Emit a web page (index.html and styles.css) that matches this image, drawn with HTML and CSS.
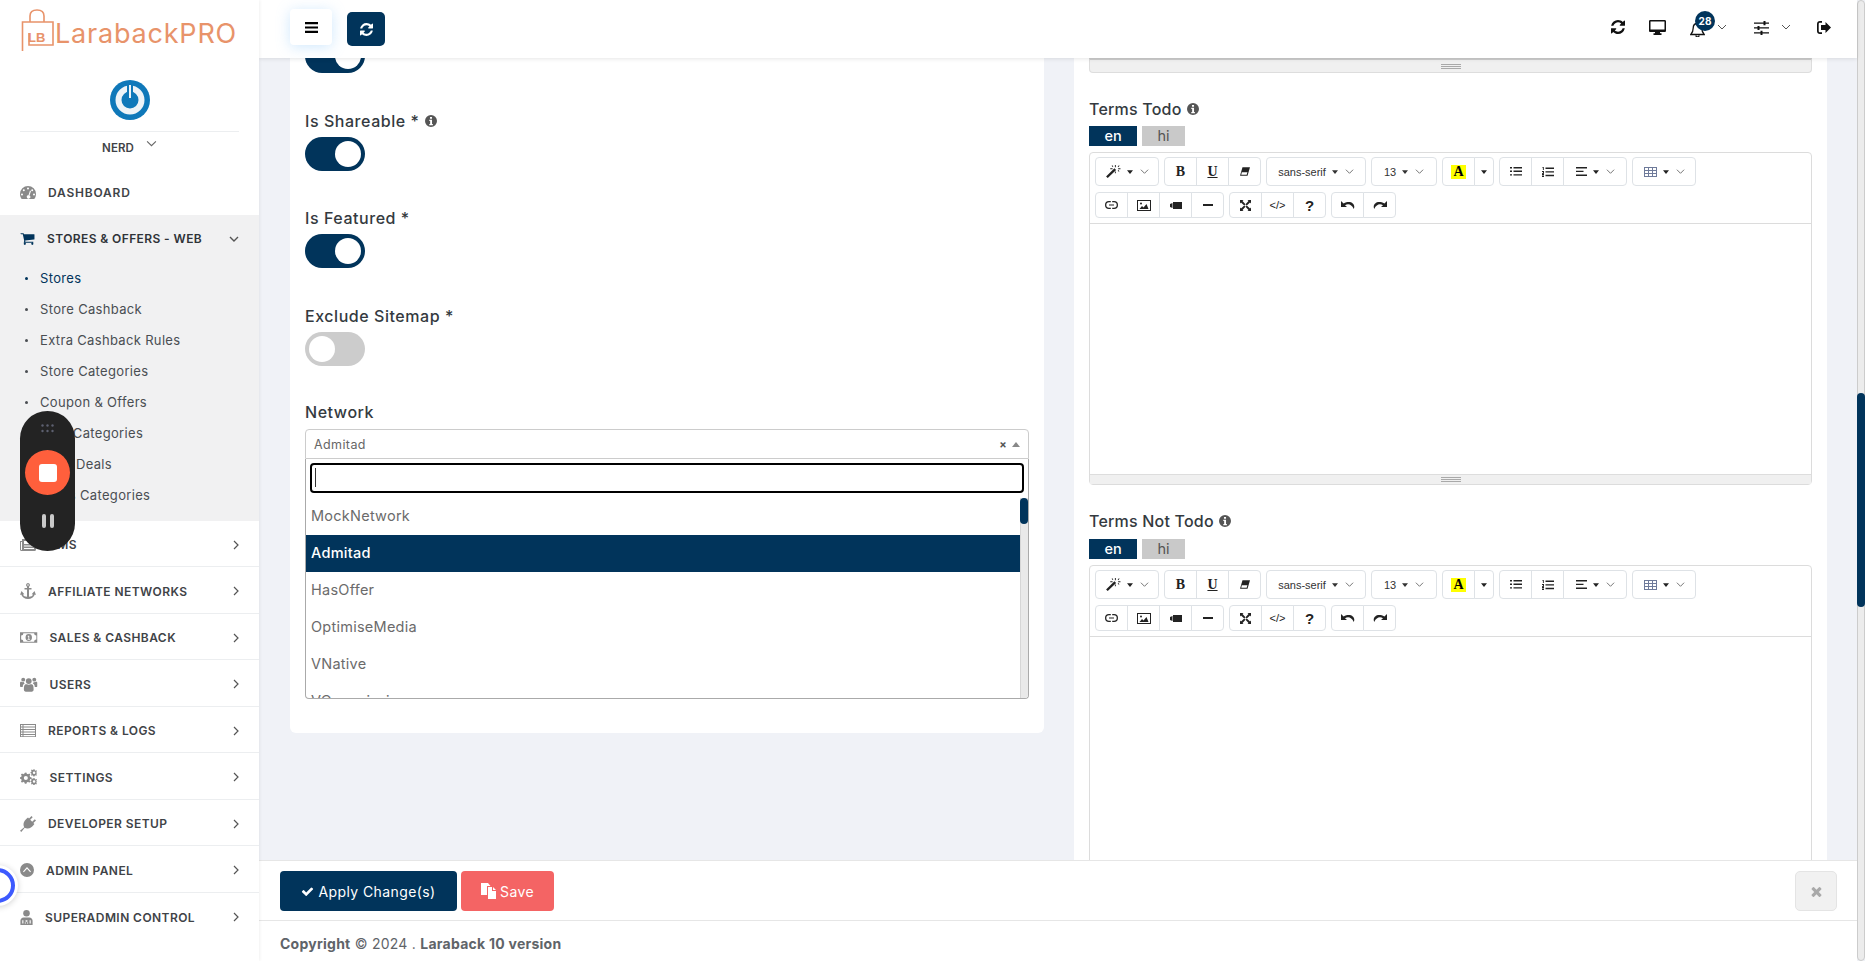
FILE: index.html
```html
<!DOCTYPE html>
<html lang="en">
<head>
<meta charset="utf-8">
<title>LarabackPRO</title>
<link rel="stylesheet" href="styles.css">
</head>
<body>
<svg class="defs" width="0" height="0" aria-hidden="true">
  <symbol id="i-refresh" viewBox="128 128 1536 1536"><path d="M1639 1056q0 5-1 7-64 268-268 434.5t-478 166.5q-146 0-282.5-55t-243.5-157l-129 129q-19 19-45 19t-45-19-19-45v-448q0-26 19-45t45-19h448q26 0 45 19t19 45-19 45l-137 137q71 66 161 102t187 36q134 0 250-65t186-179q11-17 53-117 8-23 30-23h192q13 0 22.5 9.5t9.5 22.5zm25-800v448q0 26-19 45t-45 19h-448q-26 0-45-19t-19-45 19-45l138-138q-148-137-349-137-134 0-250 65t-186 179q-11 17-53 117-8 23-30 23h-199q-13 0-22.5-9.5t-9.5-22.5v-7q65-268 270-434.5t480-166.5q146 0 284 55.5t245 156.5l130-129q19-19 45-19t45 19 19 45z"/></symbol>
  <symbol id="i-check" viewBox="0 0 1792 1792"><path d="M1671 566q0 40-28 68l-724 724-136 136q-28 28-68 28t-68-28l-136-136-362-362q-28-28-28-68t28-68l136-136q28-28 68-28t68 28l294 295 656-657q28-28 68-28t68 28l136 136q28 28 28 68z"/></symbol>
  <symbol id="i-times" viewBox="0 0 1792 1792"><path d="M1490 1322q0 40-28 68l-136 136q-28 28-68 28t-68-28l-294-294-294 294q-28 28-68 28t-68-28l-136-136q-28-28-28-68t28-68l294-294-294-294q-28-28-28-68t28-68l136-136q28-28 68-28t68 28l294 294 294-294q28-28 68-28t68 28l136 136q28 28 28 68t-28 68l-294 294 294 294q28 28 28 68z"/></symbol>
  <symbol id="i-cart" viewBox="0 128 1792 1536"><path d="M704 1536q0 52-38 90t-90 38-90-38-38-90 38-90 90-38 90 38 38 90zm896 0q0 52-38 90t-90 38-90-38-38-90 38-90 90-38 90 38 38 90zm128-1088v512q0 24-16.5 42.5t-40.5 21.5l-1044 122q13 60 13 70 0 16-24 64h920q26 0 45 19t19 45-19 45-45 19h-1024q-26 0-45-19t-19-45q0-11 8-31.5t16-36 21.5-40 15.5-29.5l-177-823h-204q-26 0-45-19t-19-45 19-45 45-19h256q16 0 28.5 6.5t19.5 15.5 13 24.5 8 26 5.5 29.5 4.5 26h1201q26 0 45 19t19 45z"/></symbol>
  <symbol id="i-info" viewBox="1 1 14 14"><path fill-rule="evenodd" d="M8 1a7 7 0 1 0 0 14A7 7 0 0 0 8 1zM6.800 3.200h2.400v2.200H6.800zM6 6.600h3.200v5h1v1.400H6v-1.400h1V8H6z"/></symbol>
  <symbol id="i-chev-r" viewBox="0 0 10 10"><path d="M3 1l4 4-4 4" fill="none" stroke="currentColor" stroke-width="1.200"/></symbol>
  <symbol id="i-chev-d" viewBox="0 0 10 10"><path d="M1 3l4 4 4-4" fill="none" stroke="currentColor" stroke-width="1"/></symbol>
  <symbol id="i-chev-db" viewBox="0 0 10 10"><path d="M1 3l4 4 4-4" fill="none" stroke="currentColor" stroke-width="1.400"/></symbol>
  <symbol id="i-caret" viewBox="0 0 8 5"><path d="M0 0h8L4 5z"/></symbol>
  <symbol id="i-dash" viewBox="0 0 16 13"><path fill-rule="evenodd" d="M8 0a8 8 0 0 0-8 8c0 2 .6 3.700 1.700 5h12.600A8 8 0 0 0 16 8a8 8 0 0 0-8-8zM8 1.500a1 1 0 1 1 0 2 1 1 0 0 1 0-2zM3.800 3.300a1 1 0 1 1 0 2 1 1 0 0 1 0-2zM12.200 3.300a1 1 0 1 1 0 2 1 1 0 0 1 0-2zM2 7.500a1 1 0 1 1 0 2 1 1 0 0 1 0-2zM14 7.500a1 1 0 1 1 0 2 1 1 0 0 1 0-2zM10 4.500l1 .4-1.500 4.600a1.700 1.700 0 1 1-1-.3z"/></symbol>
  <symbol id="i-news" viewBox="0 0 16 12"><path fill-rule="evenodd" d="M0 2h2V0h14v10.500a1.500 1.500 0 0 1-1.500 1.500h-13A1.500 1.500 0 0 1 0 10.500zM1 3v7.500a.5.500 0 0 0 1 0V3zM4 2v3h5V2zM10 2v1h4V2zM10 4v1h4V4zM4 6.500v1h10v-1zM4 9v1h10V9z"/></symbol>
  <symbol id="i-anchor" viewBox="0 0 16 16"><path fill-rule="evenodd" d="M8 0a2 2 0 0 1 1 3.700V5h2.500v1.500H9v7.300c2 0 3.600-1 4-2.300l-1.300-.2L14.500 8 16 12l-1.200-.5C14 14.200 11.200 16 8 16s-6-1.800-6.800-4.500L0 12l1.500-4 2.800 3.300-1.300.2c.4 1.300 2 2.300 4 2.300V6.500H4.500V5H7V3.700A2 2 0 0 1 8 0zm0 1.200a.800.800 0 1 0 0 1.600.800.800 0 0 0 0-1.600z"/></symbol>
  <symbol id="i-money" viewBox="0 0 18 11"><path fill-rule="evenodd" d="M0 0h18v11H0zM3.500 1.200A2.300 2.300 0 0 1 1.200 3.500v4a2.300 2.300 0 0 1 2.300 2.300h11a2.300 2.300 0 0 1 2.300-2.300v-4a2.300 2.300 0 0 1-2.300-2.300zM9 2a3.300 3.500 0 1 1 0 7 3.300 3.500 0 0 1 0-7zM8 3.800v.8h.6V7h-.8v.7h2.400V7h-.7V3.800z"/></symbol>
  <symbol id="i-users" viewBox="0 0 18 16"><circle cx="9" cy="5" r="3"/><circle cx="3.300" cy="3.500" r="2"/><circle cx="14.700" cy="3.500" r="2"/><path d="M4.500 9.500C5 8.500 6 8 7 8.300c1.300.6 2.700.6 4 0 1-.3 2 .2 2.500 1.200.5 1 .5 4 .5 4.500 0 1-.8 2-2 2H6c-1.200 0-2-1-2-2 0-.5 0-3.500.5-4.500zM0 7c0-1 .8-1.500 1.500-1.200.9.400 1.800.4 2.300.2.200.6.500 1.100 1 1.500-1.300.6-2 2-2 3.500H1c-.6 0-1-.5-1-1zM18 7c0-1-.8-1.500-1.500-1.200-.9.400-1.800.4-2.300.2-.2.600-.5 1.100-1 1.500 1.300.6 2 2 2 3.500H17c.6 0 1-.5 1-1z"/></symbol>
  <symbol id="i-list" viewBox="0 0 16 13"><path fill-rule="evenodd" d="M0 0h16v13H0zM3.500 1v1.500H15V1zM3.500 3.500V5H15V3.500zM3.500 6v1.500H15V6zM3.500 8.500V10H15V8.500zM3.500 11v1.200H15V11zM1 1v1.500h1.500V1zM1 3.500V5h1.500V3.500zM1 6v1.500h1.500V6zM1 8.500V10h1.500V8.500zM1 11v1.200h1.500V11z"/></symbol>
  <symbol id="i-cogs" viewBox="0 0 18 16"><path fill-rule="evenodd" d="M5 3.500l1.500-.2.500 1.300 1.300.6 1.200-.8 1.100 1.100-.7 1.200.5 1.300 1.500.4v1.500l-1.500.3-.5 1.300.7 1.200-1.100 1.100-1.200-.8-1.300.6-.4 1.400H5l-.4-1.400-1.300-.6-1.200.8L1 12.600l.7-1.200-.5-1.300L0 9.800V8.300l1.200-.4.500-1.300L1 5.400l1.100-1.100 1.200.8 1.300-.6zm1 3.400a2.100 2.100 0 1 0 0 4.200 2.100 2.100 0 0 0 0-4.200z"/><path fill-rule="evenodd" d="M14 0l1 .1.200 1 .8.400.9-.5.600.9-.7.700.2.900.9.400V4l-.9.300-.2.900.6.800-.7.700-.8-.5-.8.400-.3 1h-1l-.2-1-.8-.4-.9.500-.6-.8.600-.7-.2-.9-.9-.3V3l.9-.3.200-.9-.6-.7.700-.8.800.5.900-.3zm.5 2.300a1.300 1.300 0 1 0 0 2.600 1.300 1.300 0 0 0 0-2.600zM14 9l1 .1.200 1 .8.400.9-.5.600.9-.7.700.2.900.9.400V13l-.9.300-.2.900.6.800-.7.700-.8-.5-.8.400-.3 1h-1l-.2-1-.8-.4-.9.500-.6-.8.600-.7-.2-.9-.9-.3V12l.9-.3.200-.9-.6-.7.700-.8.800.5.900-.3zm.5 2.300a1.300 1.300 0 1 0 0 2.600 1.300 1.300 0 0 0 0-2.600z"/></symbol>
  <symbol id="i-plug" viewBox="0 0 16 16"><path d="M11.500 0l1.200 1.200-2.500 2.600 2 2L14.800 3.300 16 4.500 13.400 7l1 1-1 1.200C12 11 10 12.300 7.800 12.500 6.500 12.600 5.500 12.300 4.700 11.800L1.300 16 0 14.700l4.200-3.500C3.700 10.400 3.400 9.400 3.500 8.100 3.700 6 5 4 6.800 2.600L8 1.600l1 1z"/></symbol>
  <symbol id="i-admin" viewBox="0 0 14 14"><path fill-rule="evenodd" d="M7 0a7 7 0 1 0 0 14A7 7 0 0 0 7 0zM7 4l4 4.500-.8.800L7 5.800 3.800 9.300 3 8.500z"/></symbol>
  <symbol id="i-tie" viewBox="0 0 13 16"><circle cx="6.500" cy="3.500" r="3.500"/><path fill-rule="evenodd" d="M3.500 8h6c2 0 3.500 1.500 3.500 3.500V16H0v-4.500C0 9.500 1.500 8 3.500 8zM2 11v3.500h1.200V11zM5.500 11v1.500h2V11zM4.700 13.200v1.300h1.200v-1.300zM7 13.200v1.300h1.200v-1.300zM9.800 11v3.500H11V11z"/></symbol>
  <symbol id="i-desktop" viewBox="0 0 17 15"><path fill-rule="evenodd" d="M1.300 0h14.400C16.400 0 17 .6 17 1.300v9.400c0 .7-.6 1.300-1.300 1.300H11v1.300h1.500V15h-8v-1.700H6V12H1.300C.6 12 0 11.400 0 10.700V1.300C0 .6.600 0 1.300 0zm.2 1.500v8h14v-8z"/></symbol>
  <symbol id="i-bell" viewBox="0 0 15 15"><path d="M7.500 1.500c-2.800 0-4.300 2-4.300 4.500 0 3-1 5-2.400 6.500h13.400C12.800 11 11.800 9 11.800 6c0-2.500-1.500-4.500-4.300-4.500zM6 13.500a1.500 1.500 0 0 0 3 0" fill="none" stroke="currentColor" stroke-width="1.300"/></symbol>
  <symbol id="i-sliders" viewBox="0 0 15 14"><path d="M0 1.500h15v1.300H0zM0 6.300h15v1.300H0zM0 11.200h15v1.300H0zM9.500 0h2v4.300h-2zM3.500 5h2v4h-2zM6.500 9.700h2V14h-2z"/></symbol>
  <symbol id="i-signout" viewBox="0 0 14 13"><path d="M5 0v1.700H3c-.8 0-1.300.5-1.300 1.300v7c0 .8.500 1.300 1.300 1.300h2V13H3c-1.800 0-3-1.200-3-3V3c0-1.800 1.200-3 3-3zM8.500 1L14 6.500 8.500 12V9H4V4h4.500z"/></symbol>
  <symbol id="i-files" viewBox="0 0 15 16"><path fill-rule="evenodd" d="M0 0h7l2.500 3H6v9H0zM7 4h4v4h4v8H7zM12 4l3 3h-3z"/></symbol>
  <symbol id="i-wand" viewBox="0 0 16 14"><path d="M0 12.500L9 3.500l1.800 1.800-9 8.700zM9.500 0h1v2.500h-1zM13 3.500h2.500v1H13zM9.500 7h1v2h-1zM4.500 3.500H7v1H4.500zM6 .8l.8-.6 1 1.300-.8.600zM12.500 1.500l1.400-1.300.6.700-1.300 1.400zM12.500 6l.7-.6 1.200 1.200-.7.700z"/></symbol>
  <symbol id="i-eraser" viewBox="0 0 12 10"><path d="M3 0h9L9 10H0z"/><path d="M2.200 6L1.500 9h6.500l.9-3z" fill="#fff"/></symbol>
  <symbol id="i-ul" viewBox="0 0 12 9"><path d="M3.500 0H12v1.400H3.500zM3.500 3.600H12V5H3.500zM3.500 7.200H12v1.400H3.500zM0 0h2v1.400H0zM0 3.600h2V5H0zM0 7.200h2v1.400H0z"/></symbol>
  <symbol id="i-ol" viewBox="0 0 12 10"><path d="M3.500 .6H12V2H3.500zM3.500 4.200H12v1.400H3.500zM3.500 7.800H12v1.400H3.500zM.5 0h1.300v3H.9V1H.5zM0 4h2v2.700l-1 .3H2v1H0V6.600l1.100-1V5H0zM0 8.500h2V10H0z"/></symbol>
  <symbol id="i-align" viewBox="0 0 11 9"><path d="M0 0h11v1.400H0zM0 3.700h7.500v1.400H0zM0 7.500h11V9H0z"/></symbol>
  <symbol id="i-table" viewBox="0 0 13 10"><path fill-rule="evenodd" d="M0 0h13v10H0zM1 1v2h3V1zM5 1v2h3V1zM9 1v2h3V1zM1 4v2h3V4zM5 4v2h3V4zM9 4v2h3V4zM1 7v2h3V7zM5 7v2h3V7zM9 7v2h3V7z"/></symbol>
  <symbol id="i-link" viewBox="0 0 12 8"><path d="M3.500 0h1.800v1.300H3.500a2.700 2.700 0 0 0 0 5.400h1.800V8H3.500a4 4 0 0 1 0-8zM6.700 0h1.800a4 4 0 0 1 0 8H6.700V6.700h1.800a2.700 2.700 0 0 0 0-5.400H6.700zM3.500 3.400h5v1.200h-5z"/></symbol>
  <symbol id="i-pic" viewBox="0 0 14 11"><path fill-rule="evenodd" d="M0 0h14v11H0zM1 1v9h12V1z"/><path d="M2.500 9l2.500-3 1.500 1.500L9.500 4l2 5z"/><circle cx="4" cy="3.500" r="1"/></symbol>
  <symbol id="i-video" viewBox="0 0 12 7"><path d="M3 0h9v7H3zM0 2l2.500-1v5L0 5z"/></symbol>
  <symbol id="i-expand" viewBox="0 0 11 11"><path d="M0 0h3.500L2.500 1 5.500 4.200 4.200 5.500 1 2.500 0 3.500zM11 0v3.500l-1-1L6.800 5.500 5.500 4.200 8.500 1l-1-1zM0 11V7.500l1 1 3.200-3 1.300 1.300-3 3.200 1 1zM11 11H7.500l1-1-3-3.200 1.300-1.300 3.200 3 1-1z"/></symbol>
  <symbol id="i-undo" viewBox="0 0 14 8"><path d="M0 0v6h6L4 4.200C7 2.300 10.500 3 12.800 8 15 3 9.500-1.500 2.600 2.500z"/></symbol>
  <symbol id="i-redo" viewBox="0 0 14 8"><path d="M14 0v6H8l2-1.800C7 2.300 3.500 3 1.200 8-1 3 4.500-1.500 11.400 2.500z"/></symbol>
</svg>

<div class="app">
  <aside class="sidebar">
    <div class="brand">
      <svg class="bag" width="34" height="44" viewBox="0 0 34 44">
        <path d="M1.500 42V13H9M9 13V7C9 3 12 1 16 1s7 2 7 6v6M9 13h14M23 13h9v23H8V24" fill="none" stroke="#e8936a" stroke-width="1.600"/>
        <text x="7" y="33" class="bag-text">LB</text>
      </svg>
      <span class="brand-name">LarabackPRO</span>
    </div>
    <div class="avatar">
      <svg width="40" height="40" viewBox="0 0 40 40">
        <circle cx="20" cy="20" r="20" fill="#0f78b9"/>
        <circle cx="20" cy="20" r="11.500" fill="none" stroke="#eef3f7" stroke-width="6"/>
        <rect x="17" y="5" width="6" height="15" fill="#0f78b9"/>
        <rect x="19" y="5" width="2" height="13" fill="#eef3f7"/>
      </svg>
    </div>
    <div class="user"><span>NERD</span><svg class="user-chev" width="11" height="11"><use href="#i-chev-d"/></svg></div>
    <nav class="nav">
      <a class="nav-row first"><svg class="ni" width="16" height="13"><use href="#i-dash"/></svg><span>DASHBOARD</span></a>
      <div class="group">
        <a class="group-head"><svg class="ni navy" width="15" height="13"><use href="#i-cart"/></svg><span>STORES &amp; OFFERS - WEB</span><svg class="chev" width="10" height="10"><use href="#i-chev-db"/></svg></a>
        <ul class="sub">
          <li class="active">Stores</li>
          <li>Store Cashback</li>
          <li>Extra Cashback Rules</li>
          <li>Store Categories</li>
          <li>Coupon &amp; Offers</li>
          <li>Deal Categories</li>
          <li>Daily Deals</li>
          <li>Deals Categories</li>
        </ul>
      </div>
      <a class="nav-row"><svg class="ni" width="16" height="12"><use href="#i-news"/></svg><span>CMS</span><svg class="chev" width="10" height="10"><use href="#i-chev-r"/></svg></a>
      <a class="nav-row"><svg class="ni" width="16" height="16"><use href="#i-anchor"/></svg><span>AFFILIATE NETWORKS</span><svg class="chev" width="10" height="10"><use href="#i-chev-r"/></svg></a>
      <a class="nav-row"><svg class="ni" width="17.500" height="11"><use href="#i-money"/></svg><span>SALES &amp; CASHBACK</span><svg class="chev" width="10" height="10"><use href="#i-chev-r"/></svg></a>
      <a class="nav-row"><svg class="ni" width="17.500" height="16"><use href="#i-users"/></svg><span>USERS</span><svg class="chev" width="10" height="10"><use href="#i-chev-r"/></svg></a>
      <a class="nav-row"><svg class="ni" width="16" height="13"><use href="#i-list"/></svg><span>REPORTS &amp; LOGS</span><svg class="chev" width="10" height="10"><use href="#i-chev-r"/></svg></a>
      <a class="nav-row"><svg class="ni" width="17.500" height="16"><use href="#i-cogs"/></svg><span>SETTINGS</span><svg class="chev" width="10" height="10"><use href="#i-chev-r"/></svg></a>
      <a class="nav-row"><svg class="ni" width="16" height="16"><use href="#i-plug"/></svg><span>DEVELOPER SETUP</span><svg class="chev" width="10" height="10"><use href="#i-chev-r"/></svg></a>
      <a class="nav-row"><svg class="ni" width="14" height="14"><use href="#i-admin"/></svg><span>ADMIN PANEL</span><svg class="chev" width="10" height="10"><use href="#i-chev-r"/></svg></a>
      <a class="nav-row last"><svg class="ni" width="13" height="15"><use href="#i-tie"/></svg><span>SUPERADMIN CONTROL</span><svg class="chev" width="10" height="10"><use href="#i-chev-r"/></svg></a>
    </nav>
  </aside>

  <div class="main">
    <header class="topbar">
      <button class="menu-btn"><svg width="13" height="11" viewBox="0 0 13 11"><path d="M0 0h13v2.200H0zM0 4.400h13v2.200H0zM0 8.800h13V11H0z"/></svg></button>
      <button class="sync-btn"><svg width="13" height="13"><use href="#i-refresh"/></svg></button>
      <div class="top-icons">
        <svg width="14" height="14"><use href="#i-refresh"/></svg>
        <svg class="ti-desktop" width="17" height="15"><use href="#i-desktop"/></svg>
        <span class="bell"><svg width="15" height="15"><use href="#i-bell"/></svg><b class="badge">28</b></span>
        <svg class="ti-chev" width="10" height="10"><use href="#i-chev-d"/></svg>
        <svg class="ti-sliders" width="15" height="14"><use href="#i-sliders"/></svg>
        <svg class="ti-chev" width="10" height="10"><use href="#i-chev-d"/></svg>
        <svg class="ti-out" width="14" height="13"><use href="#i-signout"/></svg>
      </div>
    </header>

    <div class="content">
      <section class="card left">
        <div class="field clipped"><span class="toggle on"></span></div>
        <div class="field">
          <label class="lbl">Is Shareable * <svg class="info" width="12" height="12"><use href="#i-info"/></svg></label>
          <span class="toggle on"></span>
        </div>
        <div class="field">
          <label class="lbl">Is Featured *</label>
          <span class="toggle on"></span>
        </div>
        <div class="field">
          <label class="lbl">Exclude Sitemap *</label>
          <span class="toggle"></span>
        </div>
        <label class="lbl net">Network</label>
        <div class="select">
          <span>Admitad</span>
          <i class="clear">×</i>
          <svg class="arrow" width="8" height="5" viewBox="0 0 8 5"><path d="M0 5h8L4 0z"/></svg>
        </div>
        <div class="drop">
          <div class="search"><input class="search-input" type="text" value=""><span class="cursor"></span></div>
          <div class="opts">
            <ul class="opt-list">
              <li>MockNetwork</li>
              <li class="sel">Admitad</li>
              <li>HasOffer</li>
              <li>OptimiseMedia</li>
              <li>VNative</li>
              <li>VCommission</li>
            </ul>
            <div class="opt-track"><div class="opt-thumb"></div></div>
          </div>
        </div>
      </section>

      <section class="card right">
        <div class="statusbar first-bar"><span class="grip"></span></div>
        <div class="ed-block">
          <label class="lbl">Terms Todo <svg class="info" width="12" height="12"><use href="#i-info"/></svg></label>
          <div class="tabs"><span class="tab on">en</span><span class="tab">hi</span></div>
          <div class="editor">
            <div class="tools">
              <div class="tr">
                <div class="g"><span class="b w63"><svg class="d" width="15" height="13"><use href="#i-wand"/></svg><svg class="cr" width="6" height="4"><use href="#i-caret"/></svg><svg class="cd" width="9" height="9"><use href="#i-chev-d"/></svg></span></div>
                <div class="g"><span class="b w32 serif">B</span><span class="b w32 serif u">U</span><span class="b w33"><svg class="d" width="10" height="9"><use href="#i-eraser"/></svg></span></div>
                <div class="g"><span class="b w99 sm">sans-serif<svg class="cr" width="6" height="4"><use href="#i-caret"/></svg><svg class="cd" width="9" height="9"><use href="#i-chev-d"/></svg></span></div>
                <div class="g"><span class="b w66 sm">13<svg class="cr" width="6" height="4"><use href="#i-caret"/></svg><svg class="cd" width="9" height="9"><use href="#i-chev-d"/></svg></span></div>
                <div class="g tight"><span class="b w33 serif"><em class="hl">A</em></span><span class="b w19"><svg width="6" height="4"><use href="#i-caret"/></svg></span></div>
                <div class="g"><span class="b w32"><svg class="d" width="12" height="9"><use href="#i-ul"/></svg></span><span class="b w32"><svg class="d" width="12" height="10"><use href="#i-ol"/></svg></span><span class="b w64a"><svg class="d" width="11" height="9"><use href="#i-align"/></svg><svg class="cr" width="6" height="4"><use href="#i-caret"/></svg><svg class="cd" width="9" height="9"><use href="#i-chev-d"/></svg></span></div>
                <div class="g"><span class="b w64"><svg class="d tb" width="13" height="10"><use href="#i-table"/></svg><svg class="cr" width="6" height="4"><use href="#i-caret"/></svg><svg class="cd" width="9" height="9"><use href="#i-chev-d"/></svg></span></div>
              </div>
              <div class="tr low">
                <div class="g"><span class="b w32"><svg class="d" width="13" height="8"><use href="#i-link"/></svg></span><span class="b w32"><svg class="d" width="14" height="11"><use href="#i-pic"/></svg></span><span class="b w32"><svg class="d" width="12" height="7"><use href="#i-video"/></svg></span><span class="b w32"><svg class="d" width="10" height="2" viewBox="0 0 10 2"><path d="M0 0h10v2H0z"/></svg></span></div>
                <div class="g"><span class="b w32"><svg class="d" width="11" height="11"><use href="#i-expand"/></svg></span><span class="b w32 code">&lt;/&gt;</span><span class="b w32 q">?</span></div>
                <div class="g"><span class="b w32"><svg class="d" width="14" height="8"><use href="#i-undo"/></svg></span><span class="b w32"><svg class="d" width="14" height="8"><use href="#i-redo"/></svg></span></div>
              </div>
            </div>
            <div class="editable"></div>
            <div class="statusbar"><span class="grip"></span></div>
          </div>
        </div>
        <div class="ed-block second">
          <label class="lbl">Terms Not Todo <svg class="info" width="12" height="12"><use href="#i-info"/></svg></label>
          <div class="tabs"><span class="tab on">en</span><span class="tab">hi</span></div>
          <div class="editor">
            <div class="tools">
              <div class="tr">
                <div class="g"><span class="b w63"><svg class="d" width="15" height="13"><use href="#i-wand"/></svg><svg class="cr" width="6" height="4"><use href="#i-caret"/></svg><svg class="cd" width="9" height="9"><use href="#i-chev-d"/></svg></span></div>
                <div class="g"><span class="b w32 serif">B</span><span class="b w32 serif u">U</span><span class="b w33"><svg class="d" width="10" height="9"><use href="#i-eraser"/></svg></span></div>
                <div class="g"><span class="b w99 sm">sans-serif<svg class="cr" width="6" height="4"><use href="#i-caret"/></svg><svg class="cd" width="9" height="9"><use href="#i-chev-d"/></svg></span></div>
                <div class="g"><span class="b w66 sm">13<svg class="cr" width="6" height="4"><use href="#i-caret"/></svg><svg class="cd" width="9" height="9"><use href="#i-chev-d"/></svg></span></div>
                <div class="g tight"><span class="b w33 serif"><em class="hl">A</em></span><span class="b w19"><svg width="6" height="4"><use href="#i-caret"/></svg></span></div>
                <div class="g"><span class="b w32"><svg class="d" width="12" height="9"><use href="#i-ul"/></svg></span><span class="b w32"><svg class="d" width="12" height="10"><use href="#i-ol"/></svg></span><span class="b w64a"><svg class="d" width="11" height="9"><use href="#i-align"/></svg><svg class="cr" width="6" height="4"><use href="#i-caret"/></svg><svg class="cd" width="9" height="9"><use href="#i-chev-d"/></svg></span></div>
                <div class="g"><span class="b w64"><svg class="d tb" width="13" height="10"><use href="#i-table"/></svg><svg class="cr" width="6" height="4"><use href="#i-caret"/></svg><svg class="cd" width="9" height="9"><use href="#i-chev-d"/></svg></span></div>
              </div>
              <div class="tr low">
                <div class="g"><span class="b w32"><svg class="d" width="13" height="8"><use href="#i-link"/></svg></span><span class="b w32"><svg class="d" width="14" height="11"><use href="#i-pic"/></svg></span><span class="b w32"><svg class="d" width="12" height="7"><use href="#i-video"/></svg></span><span class="b w32"><svg class="d" width="10" height="2" viewBox="0 0 10 2"><path d="M0 0h10v2H0z"/></svg></span></div>
                <div class="g"><span class="b w32"><svg class="d" width="11" height="11"><use href="#i-expand"/></svg></span><span class="b w32 code">&lt;/&gt;</span><span class="b w32 q">?</span></div>
                <div class="g"><span class="b w32"><svg class="d" width="14" height="8"><use href="#i-undo"/></svg></span><span class="b w32"><svg class="d" width="14" height="8"><use href="#i-redo"/></svg></span></div>
              </div>
            </div>
            <div class="editable"></div>
          </div>
        </div>
      </section>
    </div>

    <div class="actions">
      <button class="btn navy-btn"><svg width="13" height="13"><use href="#i-check"/></svg>Apply Change(s)</button>
      <button class="btn red-btn"><svg width="15" height="16"><use href="#i-files"/></svg>Save</button>
      <button class="close-btn"><svg width="15" height="15"><use href="#i-times"/></svg></button>
    </div>
    <footer class="foot"><b>Copyright</b> © 2024 . <b>Laraback 10 version</b></footer>
  </div>

  <div class="page-track"><div class="page-thumb"></div></div>
</div>

<div class="recorder">
  <svg class="rec-dots" width="13" height="9" viewBox="0 0 13 9"><g fill="#5d6070"><circle cx="1.500" cy="1.500" r="1.200"/><circle cx="6.500" cy="1.500" r="1.200"/><circle cx="11.500" cy="1.500" r="1.200"/><circle cx="1.500" cy="7" r="1.200"/><circle cx="6.500" cy="7" r="1.200"/><circle cx="11.500" cy="7" r="1.200"/></g></svg>
  <span class="rec-stop"><i></i></span>
  <span class="rec-pause"><i></i><i></i></span>
</div>
<div class="ring"></div>
</body>
</html>
```
FILE: styles.css
```css
* { box-sizing: border-box; }
html, body { margin: 0; height: 100%; overflow: hidden; }
body { font-family: Inter, "Open Sans", sans-serif; color: #343a40; background: #f0f2f7; }
.defs { position: absolute; }
svg { display: block; fill: currentColor; flex: none; }
button { font-family: inherit; border: 0; padding: 0; }
ul { list-style: none; margin: 0; padding: 0; }

.app { display: flex; height: 961px; }

/* sidebar */
.sidebar { width: 259px; flex: none; background: #fff; box-shadow: 1px 0 3px rgba(0,0,0,.06); position: relative; z-index: 3; }
.brand { height: 64px; padding: 9px 0 0 21px; display: flex; align-items: flex-start; }
.bag-text { font: 700 13px "Liberation Sans", sans-serif; fill: #e8936a; }
.brand-name { font-size: 27px; color: #e8936a; margin: 8px 0 0 0; letter-spacing: .8px; line-height: 34px; }
.avatar { margin: 0 20px; height: 68px; border-bottom: 1px solid #eceef0; display: flex; justify-content: center; padding-top: 16px; }
.user { height: 40px; display: flex; justify-content: center; padding-top: 9px; font-size: 11.500px; font-weight: 600; color: #3f4347; line-height: 14px; letter-spacing: .1px; }
.user-chev { margin: -3px 0 0 12px; color: #666; }
.nav-row, .group-head { display: flex; align-items: center; padding: 0 18px 0 20px; font-size: 12px; font-weight: 600; letter-spacing: .43px; color: #3f4347; }
.nav-row { height: 46.500px; padding-top: 3px; border-bottom: 1px solid #eceef0; }
.nav-row.first { height: 43px; padding-top: 0; padding-bottom: 3px; border-bottom: 0; letter-spacing: .8px; }
.nav-row.last { border-bottom: 0; }
.ni { margin-right: 12px; color: #8a8a8a; }
.ni.navy { color: #01345b; }
.chev { margin-left: auto; color: #555; }
.group { background: #f1f1f2; height: 305.500px; }
.group-head { height: 47px; color: #2f3338; padding-right: 20px; letter-spacing: .4px; }
.sub { padding-top: 1px; }
.sub li { height: 31px; line-height: 31px; font-size: 13px; color: #4a4e52; padding-left: 40px; position: relative; letter-spacing: .33px; }
.sub li::before { content: ""; position: absolute; left: 25px; top: 14px; width: 3px; height: 3px; border-radius: 50%; background: #4a4e52; }
.sub li.active { color: #01345b; }
.sub li.active::before { background: #01345b; }

/* main */
.main { flex: 1; min-width: 0; display: flex; flex-direction: column; }
.topbar { height: 58px; flex: none; background: #fff; box-shadow: 0 1px 4px rgba(0,0,0,.1); display: flex; align-items: flex-start; padding-left: 31px; position: relative; z-index: 2; }
.menu-btn { width: 42px; height: 36px; margin-top: 9px; background: #fff; border-radius: 4px; display: flex; align-items: center; justify-content: center; color: #000; box-shadow: 0 2px 14px rgba(120,190,250,.35); }
.sync-btn { width: 38px; height: 34px; margin: 12px 0 0 15px; background: #01345b; color: #fff; border-radius: 5px; display: flex; align-items: center; justify-content: center; }
.top-icons { margin-left: auto; padding: 20px 26px 0 0; display: flex; align-items: flex-start; color: #111; }
.ti-desktop { margin-left: 24px; }
.bell { position: relative; margin: 2px 0 0 24px; width: 15px; height: 15px; display: block; }
.badge { position: absolute; left: 5px; top: -11px; width: 20px; height: 20px; border-radius: 50%; background: #01345b; color: #fff; font-size: 10px; font-weight: 700; line-height: 20px; text-align: center; }
.ti-chev { margin: 2px 0 0 12px; color: #555; }
.ti-sliders { margin: 1px 0 0 27px; }
.ti-out { margin: 1px 0 0 26px; }

.content { flex: 1; min-height: 0; overflow: hidden; display: flex; gap: 30px; padding: 0 30px 0 31px; align-items: flex-start; }
.card { background: #fff; padding: 0 15px; }
.card.left { width: 754px; height: 675px; border-radius: 0 0 6px 6px; }
.card.right { width: 753px; height: 802px; }
.field { margin-bottom: 37.500px; }
.field.clipped { margin-top: -19px; }
.lbl { display: flex; align-items: center; height: 20px; margin-bottom: 6px; font-size: 16px; font-weight: 500; color: #343a40; letter-spacing: .55px; white-space: pre; }
.lbl.net { margin-top: -1px; margin-bottom: 7px; }
.info { color: #555; margin-left: 1px; }
.toggle { display: block; width: 60px; height: 34px; border-radius: 17px; background: #ccc; position: relative; }
.toggle::after { content: ""; position: absolute; left: 4px; top: 4px; width: 26px; height: 26px; border-radius: 50%; background: #fff; }
.toggle.on { background: #01345b; }
.toggle.on::after { left: 30px; }

.select { height: 30px; border: 1px solid #ccc; border-radius: 4px 4px 0 0; display: flex; align-items: center; padding: 0 8px; font-size: 12.500px; letter-spacing: .4px; color: #666; }
.clear { margin-left: auto; font-style: normal; font-weight: 700; font-size: 11px; color: #555; }
.arrow { margin-left: 5px; color: #888; }
.drop { border: 1px solid #aaa; border-top: 0; border-radius: 0 0 4px 4px; height: 240px; overflow: hidden; }
.search { padding: 4px 4px 5px 4px; position: relative; }
.search-input { display: block; width: 100%; height: 30px; border: 2px solid #000; border-radius: 4px; background: #fff; outline: 0; }
.cursor { position: absolute; left: 9px; top: 9px; width: 1px; height: 19px; background: #333; }
.opts { display: flex; height: 200px; }
.opt-list { flex: 1; overflow: hidden; font-size: 14.500px; letter-spacing: .25px; color: #6b6b6b; }
.opt-list li { height: 37px; line-height: 36px; padding-left: 5px; }
.opt-list li.sel { background: #01345b; color: #fff; font-weight: 500; }
.opt-track { width: 8px; background: #e9e9e9; border-left: 1px solid #d6d6d6; flex: none; }
.opt-thumb { width: 8px; height: 26px; margin-left: -1px; border-radius: 4px; background: #01345b; }

/* editors */
.statusbar { height: 10px; background: #f0f0f0; border-top: 1px solid #ddd; display: flex; justify-content: center; align-items: center; }
.first-bar { height: 15px; border: 1px solid #ddd; border-top: 2px solid #ccc; border-radius: 0 0 4px 4px; }
.grip { width: 20px; height: 5px; border-top: 1px solid #a9a9a9; border-bottom: 1px solid #a9a9a9; background: linear-gradient(#a9a9a9,#a9a9a9) center/100% 1px no-repeat; }
.ed-block { margin-top: 26px; }
.ed-block.second { margin-top: 26px; }
.ed-block .lbl { margin-bottom: 7px; letter-spacing: .2px; }
.ed-block.second .lbl { margin-bottom: 8px; }
.tabs { display: flex; gap: 5px; margin-bottom: 6px; }
.tab { width: 43px; height: 20px; line-height: 20px; text-align: center; font-size: 14.500px; background: #c9c9c9; color: #555; }
.tab.on { width: 48px; background: #01345b; color: #fff; font-weight: 500; }
.editor { border: 1px solid #dcdcdc; border-radius: 4px; }
.tools { height: 71px; border-bottom: 1px solid #dcdcdc; padding: 4px 0 0 5px; }
.tr { display: flex; gap: 5px; height: 29px; }
.tr.low { height: 26px; margin-top: 6px; }
.g { display: flex; }
.g.tight { margin-right: 0; }
.b { height: 100%; display: flex; align-items: center; justify-content: center; border: 1px solid #dee2e6; margin-left: -1px; background: #fff; color: #222; }
.b:first-child { margin-left: 0; border-radius: 4px 0 0 4px; }
.b:last-child { border-radius: 0 4px 4px 0; }
.b:only-child { border-radius: 4px; }
.w32 { width: 33px; } .w33 { width: 33px; } .w19 { width: 20px; } .w63 { width: 64px; }
.w64 { width: 64px; } .w64a { width: 64px; } .w66 { width: 66px; } .w99 { width: 100px; }
.serif { font: 700 14px "Liberation Serif", serif; }
.u { text-decoration: underline; }
.hl { font-style: normal; background: #ff0; padding: 0 2px; line-height: 14px; color: #000; }
.sm { font: 11px "Liberation Sans", sans-serif; color: #333; }
.cr { margin-left: 6px; }
.cd { margin-left: 7px; color: #666; }
.tb { color: #6e7a9a; }
.code { font: 11px "Liberation Sans", sans-serif; }
.q { font: 700 15px "Liberation Sans", sans-serif; }
.editable { height: 250px; background: #fff; }

/* actions */
.actions { height: 60px; flex: none; background: #fff; border-top: 1px solid #e6e6e6; display: flex; align-items: flex-start; padding: 10px 20px 0 21px; gap: 4px; position: relative; z-index: 1; }
.btn { height: 40px; border-radius: 4px; color: #fff; font-size: 14px; letter-spacing: .4px; display: flex; align-items: center; justify-content: center; gap: 4px; }
.navy-btn { width: 177px; background: #01345b; }
.red-btn { width: 93px; background: #f46464; }
.close-btn { width: 42px; height: 40px; margin-left: auto; background: #f1f1f1; border: 1px solid #e4e4e4; border-radius: 5px; color: #a9a9a9; display: flex; align-items: center; justify-content: center; }
.foot { height: 41px; flex: none; background: #fff; border-top: 1px solid #e6e6e6; padding-left: 21px; line-height: 45px; font-size: 14px; letter-spacing: .25px; color: #5f6469; }
.foot b { font-weight: 700; }

.page-track { width: 8px; flex: none; background: #ececec; border: 1px solid #ccc; border-radius: 4px; }
.page-thumb { width: 8px; height: 214px; margin: 392px 0 0 -1px; border-radius: 4px; background: #01345b; }

/* floating recorder widget */
.recorder { position: absolute; left: 20px; top: 411px; width: 55px; height: 140px; border-radius: 28px; background: #232323; z-index: 5; display: flex; flex-direction: column; align-items: center; }
.rec-dots { margin-top: 13px; }
.rec-stop { width: 45px; height: 45px; margin-top: 17px; border-radius: 50%; background: #ff5f3c; display: flex; align-items: center; justify-content: center; }
.rec-stop i { display: block; width: 18px; height: 18px; border-radius: 3px; background: #fff; }
.rec-pause { display: flex; gap: 4px; margin-top: 19px; }
.rec-pause i { display: block; width: 4px; height: 14px; border-radius: 2px; background: #c9c9c9; }
.ring { position: absolute; left: -20px; top: 868px; width: 35px; height: 35px; border-radius: 50%; background: #fff; border: 4px solid #3d5afe; box-shadow: 0 0 0 3px #fff, 0 1px 6px 3px rgba(0,0,0,.18); z-index: 5; }
```
